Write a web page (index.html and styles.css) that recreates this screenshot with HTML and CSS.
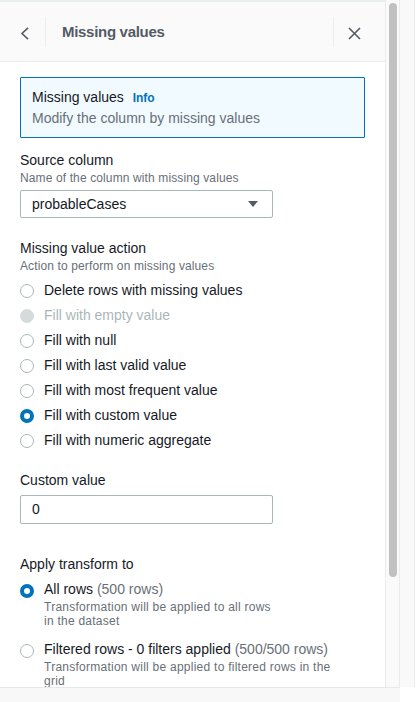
FILE: index.html
```html
<!DOCTYPE html>
<html lang="en">
<head>
<meta charset="utf-8">
<title>Missing values</title>
<link rel="stylesheet" href="styles.css">
</head>
<body>
<div class="app">
  <div class="main">
    <aside class="panel">
      <header class="hdr">
        <button class="back" aria-label="Back">
          <svg width="10" height="13" viewBox="0 0 10 13"><path d="M8 0.8 L2 6.5 L8 12.2" fill="none" stroke="#545b64" stroke-width="1.6"/></svg>
        </button>
        <div class="title">Missing values</div>
        <button class="close" aria-label="Close">
          <svg width="13" height="13" viewBox="0 0 13 13"><path d="M1 1 L12 12 M12 1 L1 12" fill="none" stroke="#545b64" stroke-width="1.6"/></svg>
        </button>
      </header>
      <div class="body">
        <div class="info">
          <div class="info-title">Missing values <span class="info-link">Info</span></div>
          <div class="info-sub">Modify the column by missing values</div>
        </div>

        <div class="field first">
          <div class="label">Source column</div>
          <div class="desc">Name of the column with missing values</div>
          <div class="select">
            <span>probableCases</span>
            <svg width="10" height="6" viewBox="0 0 10 6"><path d="M0 0 H10 L5 6 Z" fill="#545b64"/></svg>
          </div>
        </div>

        <div class="field section">
          <div class="label">Missing value action</div>
          <div class="desc">Action to perform on missing values</div>
          <div class="radios">
            <div class="radio"><span class="dot"></span><span>Delete rows with missing values</span></div>
            <div class="radio disabled"><span class="dot"></span><span>Fill with empty value</span></div>
            <div class="radio"><span class="dot"></span><span>Fill with null</span></div>
            <div class="radio"><span class="dot"></span><span>Fill with last valid value</span></div>
            <div class="radio"><span class="dot"></span><span>Fill with most frequent value</span></div>
            <div class="radio checked"><span class="dot"></span><span>Fill with custom value</span></div>
            <div class="radio"><span class="dot"></span><span>Fill with numeric aggregate</span></div>
          </div>
        </div>

        <div class="field custom">
          <div class="label">Custom value</div>
          <div class="input">0</div>
        </div>

        <div class="field apply">
          <div class="label">Apply transform to</div>
          <div class="option checked">
            <span class="dot"></span>
            <div class="opt-text">
              <div class="opt-label">All rows <span class="muted">(500 rows)</span></div>
              <div class="opt-desc">Transformation will be applied to all rows<br>in the dataset</div>
            </div>
          </div>
          <div class="option second">
            <span class="dot"></span>
            <div class="opt-text">
              <div class="opt-label">Filtered rows - 0 filters applied <span class="muted">(500/500 rows)</span></div>
              <div class="opt-desc">Transformation will be applied to filtered rows in the grid</div>
            </div>
          </div>
        </div>
      </div>
    </aside>
    <div class="vscroll"><div class="thumb"></div></div>
    <div class="gutter"></div>
  </div>
  <div class="hscroll"></div>
</div>
</body>
</html>
```

FILE: styles.css
```css
* { box-sizing: border-box; }
html, body { margin: 0; padding: 0; background: #ffffff; }
body {
  font-family: "Liberation Sans", Arial, sans-serif;
  color: #16191f;
  font-size: 14px;
  line-height: 20px;
}
.app {
  width: 416px;
  height: 702px;
  display: grid;
  grid-template-rows: 687px 15px;
  overflow: hidden;
}
.main {
  display: flex;
  height: 687px;
  overflow: hidden;
}
.panel {
  width: 386px;
  flex: none;
  border-right: 1px solid #e9ebed;
  overflow: hidden;
  background: #ffffff;
}
.vscroll {
  width: 14px;
  flex: none;
  background: #fafafa;
  border-right: 1px solid #e9ebed;
  padding: 3px 2px 0 3px;
}
.thumb {
  width: 8px;
  height: 574px;
  border-radius: 4px;
  background: #c1c1c1;
}
.gutter {
  width: 15px;
  flex: none;
  background: #f9f9f9;
  border-right: 1px solid #e9ebed;
}
.hscroll {
  width: 400px;
  border-top: 1px solid #e6e8ea;
  background: #f8f8f8;
}

/* header */
.hdr {
  height: 62px;
  display: flex;
  align-items: center;
  padding-top: 1px;
  background: #fafafa;
  border-top: 2px solid #eaeded;
  border-bottom: 1px solid #eaeded;
}
.hdr button {
  border: 0;
  background: none;
  padding: 0;
  margin: 0;
  display: flex;
  align-items: center;
  cursor: pointer;
}
.back {
  width: 45px;
  height: 30px;
  padding-left: 20px !important;
}
.back svg { display: block; margin-top: 2px; }
.title {
  flex: 1;
  height: 30px;
  border-left: 1px solid #eaeded;
  padding-left: 16px;
  font-size: 15px;
  font-weight: bold;
  letter-spacing: -0.3px;
  color: #545b64;
  line-height: 30px;
}
.close {
  width: 52px;
  height: 30px;
  border-left: 1px solid #eaeded !important;
  padding-left: 14px !important;
}
.close svg { display: block; margin-top: 2px; }

/* body */
.body {
  padding: 15px 20px 0 20px;
}
.info {
  border: 1px solid #0073bb;
  background: #f1faff;
  padding: 9px 11px;
  border-radius: 1px;
}
.info-link {
  color: #0073bb;
  font-weight: bold;
  font-size: 12px;
  margin-left: 5px;
}
.info-sub { color: #687078; }

.label { font-size: 14px; line-height: 20px; color: #16191f; }
.desc {
  font-size: 12px;
  line-height: 16px;
  color: #687078;
  letter-spacing: 0.12px;
}

.first { margin-top: 12px; }
.section { margin-top: 20px; }
.custom { margin-top: 18px; }
.apply { margin-top: 30px; }

.select {
  margin-top: 4px;
  width: 253px;
  height: 28px;
  border: 1px solid #aab7b8;
  border-radius: 2px;
  display: flex;
  align-items: center;
  justify-content: space-between;
  padding: 0 14px 0 11px;
}
.select svg { display: block; }

.input {
  margin-top: 5px;
  width: 253px;
  height: 29px;
  border: 1px solid #aab7b8;
  border-radius: 2px;
  padding-left: 11px;
  line-height: 27px;
}

.radios { margin-top: 3px; }
.radio {
  height: 25px;
  display: flex;
  align-items: center;
  gap: 10px;
}
.dot {
  width: 14px;
  height: 14px;
  flex: none;
  border-radius: 50%;
  border: 1px solid #aab7b8;
  background: #ffffff;
  margin-top: 2px;
}
.disabled { color: #aab7b8; }
.disabled .dot { border-color: #d5dbdb; background: #d5dbdb; }
.checked > .dot { border: 4.5px solid #0073bb; }

.option {
  margin-top: 5px;
  display: flex;
  align-items: flex-start;
  gap: 10px;
}
.option .dot { margin-top: 5px; }
.option.second { margin-top: 11px; }
.opt-text { width: 300px; }
.opt-label { line-height: 20px; }
.muted { color: #687078; }
.opt-desc {
  margin-top: 1px;
  font-size: 12px;
  line-height: 14px;
  color: #687078;
  letter-spacing: 0.25px;
}
```
